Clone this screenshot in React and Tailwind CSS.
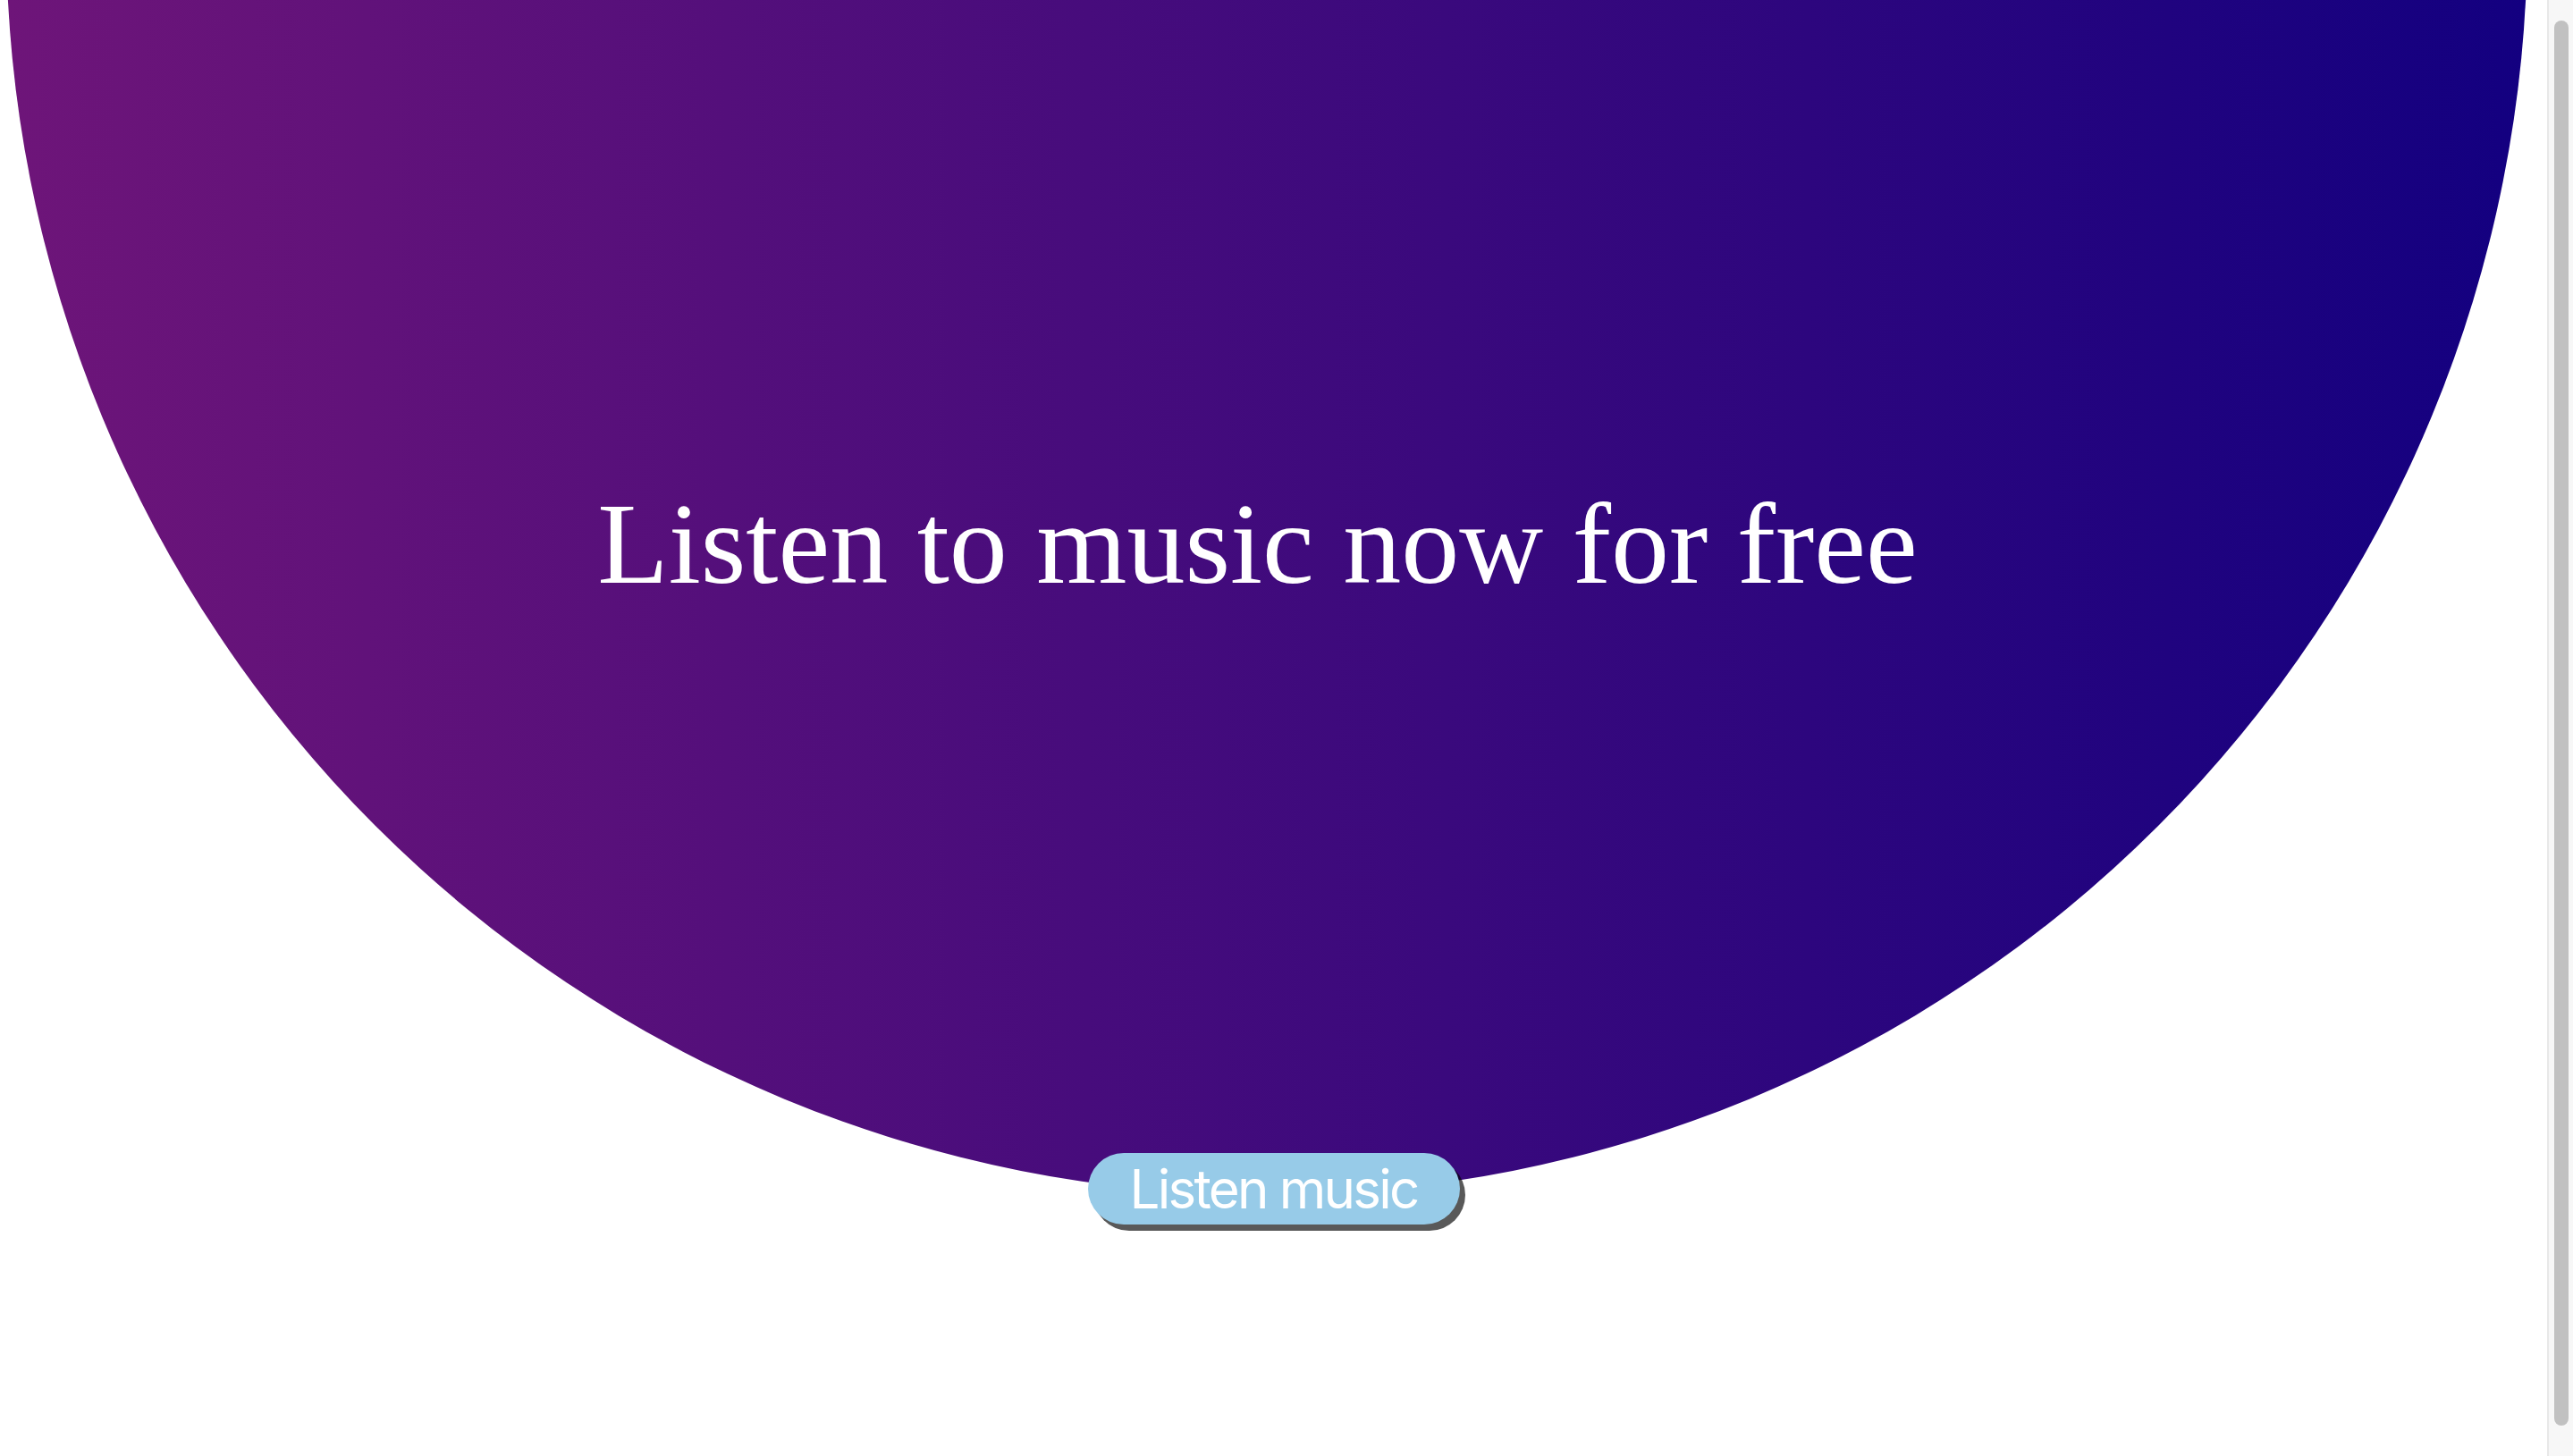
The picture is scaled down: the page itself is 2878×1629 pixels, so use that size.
export default function App() {
  return (
    <div className="flex h-screen w-full overflow-hidden bg-white">
      <main className="flex min-w-0 flex-1 flex-col items-center overflow-hidden">
        <div className="ml-[7px] mt-[-1483px] flex h-[2820px] w-[2820px] shrink-0 flex-col items-center justify-end self-start rounded-full bg-[linear-gradient(to_right,#6e1579,#130080)] pb-[664px] pr-[21px]">
          <h1 className="whitespace-nowrap font-['Liberation_Serif',serif] text-[130px] font-normal leading-none text-white">
            Listen to music now for free
          </h1>
        </div>
        <button
          type="button"
          className="mt-[-47px] flex h-[80px] w-[416px] shrink-0 items-center justify-center rounded-full bg-[#97cbe8] font-['Inter',sans-serif] text-[60px] leading-none tracking-[-0.046em] text-white shadow-[6px_7px_0_rgba(0,0,0,0.65)]"
        >
          Listen music
        </button>
      </main>
      <aside className="h-full w-[29px] shrink-0 border-l-2 border-[#e8e8e8] bg-[#f7f7f7] pb-[34px] pl-[6px] pr-[5px] pt-[23px]">
        <div className="h-full w-[16px] rounded-full bg-[#c1c1c1]" />
      </aside>
    </div>
  );
}
